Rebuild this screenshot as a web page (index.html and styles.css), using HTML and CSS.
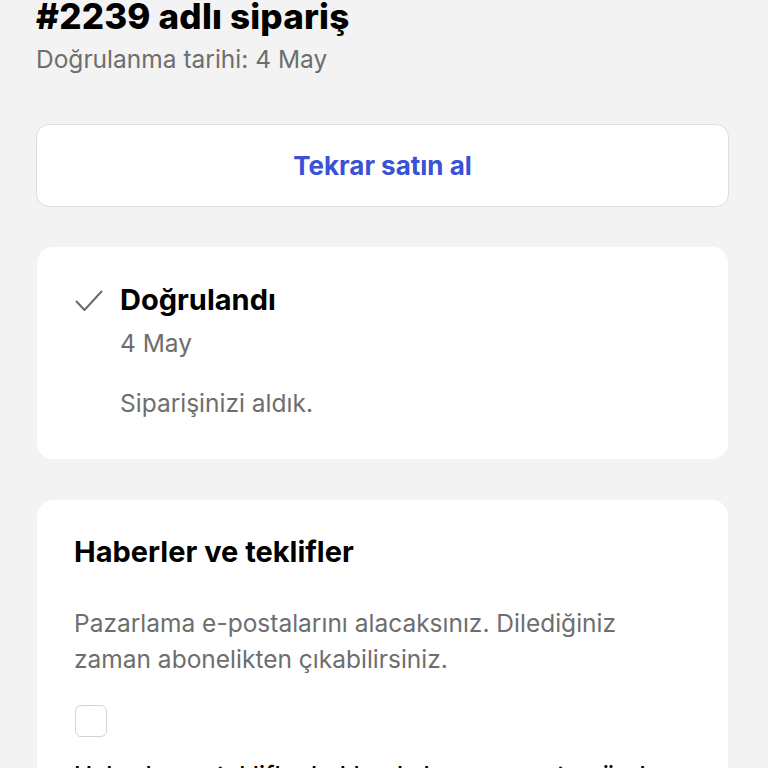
FILE: index.html
```html
<!DOCTYPE html>
<html lang="tr">
<head>
<meta charset="utf-8">
<title>#2239 adlı sipariş</title>
<link rel="stylesheet" href="styles.css">
</head>
<body>
<main class="page">
  <header class="order-head">
    <h1 class="order-title">#2239 adlı sipariş</h1>
    <p class="order-date">Doğrulanma tarihi: 4 May</p>
  </header>

  <button class="rebuy" type="button">Tekrar satın al</button>

  <section class="card status">
    <svg class="status-icon" viewBox="0 0 28 22" width="28" height="22" aria-hidden="true">
      <path d="M1.5 11.5 L9.5 20 L26.5 1.5" fill="none" stroke="#6b6b6b" stroke-width="2" stroke-linecap="round" stroke-linejoin="round"/>
    </svg>
    <div class="status-body">
      <h2 class="status-title">Doğrulandı</h2>
      <p class="status-date">4 May</p>
      <p class="status-note">Siparişinizi aldık.</p>
    </div>
  </section>

  <section class="card news">
    <h2 class="news-title">Haberler ve teklifler</h2>
    <p class="news-text">Pazarlama e-postalarını alacaksınız. Dilediğiniz zaman abonelikten çıkabilirsiniz.</p>
    <label class="news-opt">
      <span class="box"></span>
    </label>
    <p class="news-label">Haberler ve teklifler hakkında bana e-posta gönder</p>
  </section>
</main>
</body>
</html>
```

FILE: styles.css
```css
* { box-sizing: border-box; }

html, body {
  margin: 0;
  padding: 0;
  background: #f3f3f3;
  height: 768px;
  overflow: hidden;
}

body {
  font-family: Inter, "Noto Sans", "Liberation Sans", sans-serif;
  color: #000;
}

.page {
  padding: 0 39px 0 36px;
  display: flex;
  flex-direction: column;
}

.order-title {
  margin: 0;
  font-size: 35px;
  font-weight: 800;
  line-height: 32px;
  letter-spacing: 0.2px;
}

.order-date {
  margin: 12px 0 0;
  font-size: 24.5px;
  line-height: 30px;
  color: #6e6e6e;
}

.rebuy {
  margin-top: 50px;
  height: 83px;
  width: 100%;
  background: #fff;
  border: 1px solid #dedede;
  border-radius: 13px;
  font-family: inherit;
  font-size: 26px;
  font-weight: 700;
  color: #3a52d3;
}

.card {
  background: #fff;
  border-radius: 16px;
  margin: 0 1px;
}

.status {
  margin-top: 40px;
  height: 212px;
  padding: 36px 38px 0 38px;
  display: flex;
  gap: 17px;
}

.status-icon {
  margin-top: 7px;
  flex: none;
}

.status-title {
  margin: 0;
  font-size: 29px;
  font-weight: 700;
  line-height: 34px;
}

.status-date,
.status-note {
  margin: 0;
  font-size: 24.5px;
  line-height: 30px;
  color: #6e6e6e;
}

.status-date { margin-top: 11px; }
.status-note { margin-top: 30px; }

.news {
  margin-top: 41px;
  padding: 35px 37px 0 37px;
  flex: none;
  height: 400px;
}

.news-title {
  margin: 0;
  font-size: 29px;
  font-weight: 700;
  line-height: 34px;
}

.news-text {
  margin: 36px 0 0;
  font-size: 24.5px;
  line-height: 36px;
  color: #6e6e6e;
}

.news-opt {
  display: block;
  margin-top: 28px;
}

.box {
  display: block;
  width: 32px;
  height: 32px;
  margin-left: 1px;
  border: 1.5px solid #d4d4d4;
  border-radius: 6px;
  background: #fff;
}

.news-label {
  margin: 23px 0 0;
  font-size: 24.5px;
  line-height: 30px;
  font-weight: 500;
}
```
